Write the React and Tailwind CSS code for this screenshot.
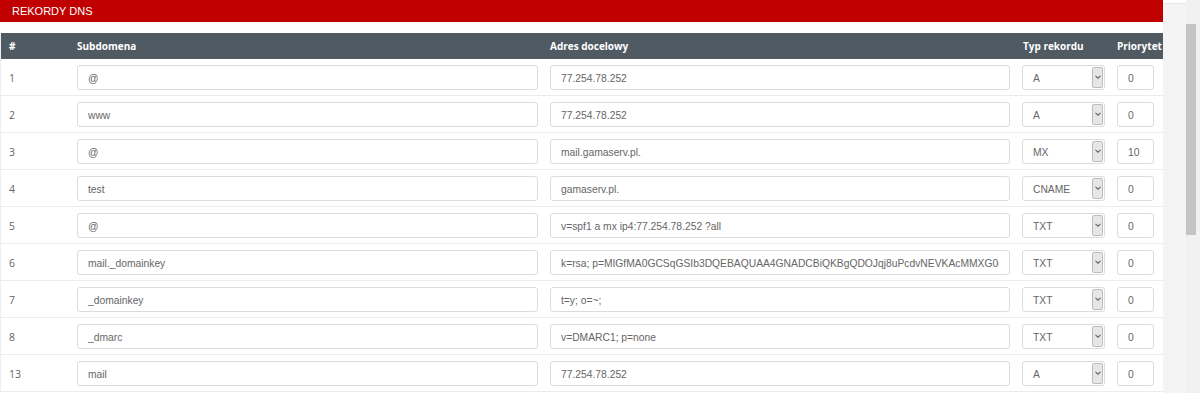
import React from 'react';

const records = [
  { id: 1, sub: '@', target: '77.254.78.252', type: 'A', prio: '0' },
  { id: 2, sub: 'www', target: '77.254.78.252', type: 'A', prio: '0' },
  { id: 3, sub: '@', target: 'mail.gamaserv.pl.', type: 'MX', prio: '10' },
  { id: 4, sub: 'test', target: 'gamaserv.pl.', type: 'CNAME', prio: '0' },
  { id: 5, sub: '@', target: 'v=spf1 a mx ip4:77.254.78.252 ?all', type: 'TXT', prio: '0' },
  {
    id: 6,
    sub: 'mail._domainkey',
    target:
      'k=rsa; p=MIGfMA0GCSqGSIb3DQEBAQUAA4GNADCBiQKBgQDOJqj8uPcdvNEVKAcMMXG0ol7sWq2Yd',
    type: 'TXT',
    prio: '0',
  },
  { id: 7, sub: '_domainkey', target: 't=y; o=~;', type: 'TXT', prio: '0' },
  { id: 8, sub: '_dmarc', target: 'v=DMARC1; p=none', type: 'TXT', prio: '0' },
  { id: 13, sub: 'mail', target: '77.254.78.252', type: 'A', prio: '0' },
];

const inputCls =
  "h-[25px] rounded-[3px] border border-[#dcdcdc] bg-white px-[10px] pt-[1px] text-[10.3px] text-[#666] outline-none font-['Liberation_Sans',Arial,sans-serif]";

const SelectBox = ({ value }) => (
  <div className="flex h-[25px] w-[83px] rounded-[3px] border border-[#dcdcdc] bg-white pl-[10px] pr-[1px]">
    <span className="block flex-1 pt-[1px] text-[10.3px] leading-[23px] text-[#666] font-['Liberation_Sans',Arial,sans-serif]">
      {value}
    </span>
    <span className="my-[1px] flex w-[11px] items-center justify-center rounded-[2px] border border-[#bdbdbd] bg-[#e6e6e6]">
      <svg width="6" height="4" viewBox="0 0 6 4">
        <path d="M0.5 0.8 L3 3.2 L5.5 0.8" fill="none" stroke="#666" strokeWidth="1.1" />
      </svg>
    </span>
  </div>
);

const Row = ({ r }) => (
  <div className="grid h-[37px] grid-cols-[70px_473px_472px_95px_53px] items-center border-b border-[#ececec]">
    <div className="pl-[8px] pt-[3px] text-[10.5px] text-[#666] font-['Open_Sans',sans-serif]">{r.id}</div>
    <div className="px-[6px]">
      <input readOnly value={r.sub} className={`${inputCls} w-full`} />
    </div>
    <div className="px-[6px]">
      <input readOnly value={r.target} className={`${inputCls} w-full`} />
    </div>
    <div className="px-[6px]">
      <SelectBox value={r.type} />
    </div>
    <div className="px-[6px]">
      <input readOnly value={r.prio} className={`${inputCls} w-[37px] px-[9px]`} />
    </div>
  </div>
);

export default function App() {
  return (
    <div className="flex h-[393px] w-[1200px] overflow-hidden bg-[#f4f4f4]">
      <div className="w-[1163px] shrink-0 bg-white">
        <div className="flex h-[22px] items-center bg-[#c00000] pl-[12px] text-[11px] text-white font-['Liberation_Sans',Arial,sans-serif]">
          REKORDY DNS
        </div>
        <div className="mt-[11px] border-l border-[#eee]">
          <div className="grid h-[26px] grid-cols-[70px_473px_472px_95px_53px] items-center bg-[#4f5a63] text-[10px] font-bold text-white font-['Open_Sans',sans-serif]">
            <div className="pl-[8px]">#</div>
            <div className="pl-[6px]">Subdomena</div>
            <div className="pl-[6px]">Adres docelowy</div>
            <div className="pl-[7px]">Typ rekordu</div>
            <div className="pl-[6px]">Priorytet</div>
          </div>
          {records.map((r) => (
            <Row key={r.id} r={r} />
          ))}
        </div>
      </div>
      <div className="w-[23px] shrink-0">
        <div className="h-[4px] border-b border-[#e6e6e6] bg-white" />
      </div>
      <div className="w-[14px] shrink-0 bg-[#f1f1f1] pt-[24px]">
        <div className="h-[211px] w-[10px] bg-[#c4c4c4]" />
      </div>
    </div>
  );
}
